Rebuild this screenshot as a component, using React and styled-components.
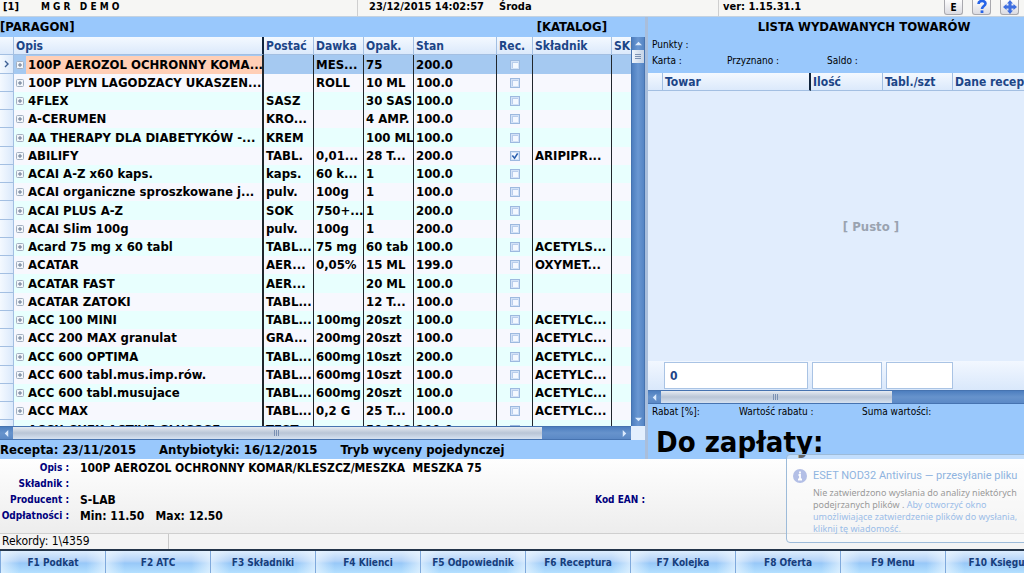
import React from "react"
import styled, { createGlobalStyle, css } from "styled-components"

const GlobalStyle = createGlobalStyle`
  * {
    box-sizing: border-box;
  }

  body {
    margin: 0;
    overflow: hidden;
    background: #f5f5f5;
    color: #000;
    font-family: "DejaVu Sans Condensed", "Liberation Sans", sans-serif;
    font-size: 13px;
    font-weight: 700;
  }

  button,
  input {
    font: inherit;
    color: inherit;
    margin: 0;
    padding: 0;
  }
`

const Screen = styled.div`
  height: 100vh;
  display: flex;
  flex-direction: column;
`

const TopBar = styled.header`
  flex: 0 0 17px;
  display: grid;
  grid-template-columns: 358px 361px 1fr;
  background: #f6f6f4;
  border-bottom: 1px solid #c4d2e0;
  font-size: 11px;
  line-height: 13px;
  white-space: pre;
`

const TopCell = styled.div`
  display: flex;
  gap: ${p => p.$gap || 0}px;
  padding-left: ${p => p.$indent}px;
  border-right: ${p => (p.$last ? 0 : 1)}px solid #cfcfcf;
`

const User = styled.span`
  font-size: 10px;
`

const Tools = styled.div`
  display: flex;
  gap: 9px;
  margin-left: auto;
  padding-right: 5px;
`

const ToolButton = styled.button`
  width: 19px;
  height: 15px;
  display: flex;
  align-items: center;
  justify-content: center;
  border: 1px solid #a9a9ae;
  border-top: 0;
  border-radius: 0 0 3px 3px;
  background: linear-gradient(#fdfdfd, #dcdce2);
  font-size: 10px;
`

const Main = styled.main`
  flex: 1 1 0;
  min-height: 0;
  display: grid;
  grid-template-columns: 645fr 379fr;
`

const Panel = styled.section`
  min-width: 0;
  min-height: 0;
  overflow: hidden;
  display: flex;
  flex-direction: column;
  background: #99c8fc;
  border-left: ${p => (p.$divided ? 3 : 0)}px solid #a9bedb;
`

const Heading = styled.div`
  flex: 0 0 20px;
  display: flex;
  justify-content: space-between;
  padding-right: 38px;
  line-height: 20px;
`

const HeadingText = styled.h2`
  margin: 0;
  font-size: 13px;
`

const GridArea = styled.div`
  flex: 1 1 0;
  min-height: 0;
  display: flex;
`

const GridView = styled.div`
  flex: 1 1 0;
  min-width: 0;
  overflow: hidden;
  background: #f8f9ff;
`

const Table = styled.table`
  width: ${p => p.$width}px;
  table-layout: fixed;
  border-collapse: separate;
  border-spacing: 0;
`

const Th = styled.th`
  height: 18px;
  padding: 0 0 0 2px;
  overflow: hidden;
  text-align: left;
  white-space: nowrap;
  font-size: 12px;
  line-height: 16px;
  color: #1c4587;
  background: linear-gradient(#f4f9ff, #dbe9fb);
  border-right: ${p => (p.$thick ? "2px solid #10243c" : "1px solid #a3bfe2")};
  border-bottom: 1px solid #a3bfe2;
`

const Td = styled.td`
  height: 18px;
  padding: 0 0 0 2px;
  overflow: hidden;
  white-space: nowrap;
  line-height: 18px;
  border-right: ${p => (p.$thick ? 2 : 1)}px solid #20262c;
`

const Marker = styled.td`
  padding: 0 0 0 4px;
  line-height: 0;
  background: linear-gradient(90deg, #f4f9ff, #dbe9fb);
  border-right: 1px solid #a3bfe2;
  border-bottom: 1px solid #a3bfe2;
`

const Row = styled.tr`
  background: #f7f8fe;

  &:nth-child(odd) {
    background: #e8fffe;
  }

  &:nth-child(4n + 1) td {
    height: 19px;
  }

  ${p =>
    p.$selected &&
    css`
      &&& {
        background: #a5c9f1;
      }
    `}
`

const NameCell = styled.div`
  display: flex;
  align-items: center;
  gap: 2px;
`

const NameText = styled.span`
  flex: 1 1 0;
  padding-left: 2px;
  overflow: hidden;
  background: ${p => (p.$selected ? "#ffcfb6" : "transparent")};
`

const TickBox = styled.label`
  display: grid;
  place-items: center;
  padding-right: 2px;

  > * {
    grid-area: 1 / 1;
  }

  svg {
    pointer-events: none;
  }
`

const Tick = styled.input.attrs({ type: "checkbox" })`
  appearance: none;
  width: 10px;
  height: 10px;
  border: 1px solid #9db9df;
  background: #f4f8ff;
  box-shadow: inset 0 0 0 1px #d3e2f7, inset 2px 2px 0 0 #b9cdec;

  &:checked {
    box-shadow: inset 0 0 0 1px #d3e2f7;
  }
`

const VBar = styled.div`
  flex: 0 0 14px;
  display: flex;
  flex-direction: column;
  background: linear-gradient(90deg, #4d7ebf, #6a97d2 50%, #5585c4);
  border: 1px solid #4673b0;
  border-width: 0 1px;
`

const HBar = styled.div`
  flex: 0 0 14px;
  height: 14px;
  display: flex;
  background: linear-gradient(#4d7ebf, #6793cc 50%, #5b89c6);
  border: 1px solid #4673b0;
  border-width: 1px 0;
  margin-right: ${p => p.$end || 0}px;
`

const HBarRow = styled.div`
  flex: 0 0 14px;
  background: #e3effd;
`

const ArrowButton = styled.button`
  flex: 0 0 13px;
  display: flex;
  align-items: center;
  justify-content: center;
  border: 0;
  background: transparent;
`

const HThumb = styled.div`
  flex: ${p => p.$grow} 1 0;
  display: flex;
  align-items: center;
  justify-content: center;
  background: linear-gradient(#e6ebf2, #b9c5d6 50%, #d6e2f1);
`

const Rest = styled.div`
  flex: ${p => p.$grow || 1} 1 0;
`

const VThumb = styled.div`
  flex: 0 0 13px;
  display: flex;
  align-items: center;
  justify-content: center;
  background: linear-gradient(90deg, #eef4fb, #c5d3e6);
`

const StatusLine = styled.div`
  flex: 0 0 19px;
  display: flex;
  gap: 23px;
  line-height: 19px;
  white-space: nowrap;
`

/* the issue list is laid out wider than the window and runs off its edge */
const Wide = styled.div`
  flex: 1 1 0;
  min-width: 432px;
  min-height: 0;
  display: flex;
  flex-direction: column;
`

const ListTitle = styled.h2`
  flex: 0 0 20px;
  margin: 0;
  font-size: 13px;
  line-height: 20px;
  text-align: center;
`

const Facts = styled.div`
  flex: 0 0 ${p => p.$height}px;
  display: grid;
  grid-template-columns: ${p => p.$columns};
  align-content: start;
  padding-left: 4px;
  font-size: 10px;
  font-weight: 400;
  line-height: 16px;
  white-space: nowrap;
`

const Fact = styled.span`
  grid-column: ${p => (p.$full ? "1 / -1" : "auto")};
`

const Empty = styled.div`
  flex: 1 1 0;
  display: flex;
  align-items: center;
  justify-content: center;
  padding-left: 14px;
  background: #e1edfd;
  color: #9aa3b0;
`

const Totals = styled.div`
  flex: 0 0 29px;
  display: grid;
  grid-template-columns: 144px 70px 67px;
  gap: 4px;
  padding: 1px 0 1px 16px;
  background: linear-gradient(#f2f7ff, #d9e8fb);
`

const TotalInput = styled.input`
  min-width: 0;
  width: 100%;
  padding-left: 5px;
  border: 1px solid #a9c3e4;
  background: #fff;
  color: #1c4587;
  font-size: 12px;
`

const Due = styled.div`
  flex: 0 0 38px;
  overflow: hidden;
  padding-left: 8px;
  font-size: 29px;
  line-height: 42px;
`

const Details = styled.dl`
  flex: 0 0 75px;
  margin: 0;
  padding-top: 1px;
  display: grid;
  grid-template-columns: 69px 500fr auto 365fr;
  grid-auto-rows: 16px;
  column-gap: 11px;
  line-height: 16px;
  background: linear-gradient(#fefefe, #ededed);
  border-bottom: 1px solid #cfcfcf;
`

const Term = styled.dt`
  grid-column: ${p => p.$column || 1};
  text-align: right;
  white-space: nowrap;
  font-size: 10px;
  color: #00007d;
`

const Value = styled.dd`
  grid-column: 2;
  margin: 0;
  font-size: 12px;
  white-space: pre;
`

const Records = styled.div`
  flex: 0 0 15px;
  display: flex;
  background: #f4f4f4;
  font-size: 12px;
  font-weight: 400;
  line-height: 15px;
`

const RecordCount = styled.span`
  width: 169px;
  padding-left: 2px;
  border-right: 1px solid #c9c9c9;
`

const Keys = styled.nav`
  flex: 0 0 24px;
  display: flex;
  overflow: hidden;
  border-top: 2px solid #24354a;
`

const KeyButton = styled.button`
  flex: 1 0 105px;
  border: 0;
  border-left: 1px solid #7fa9dc;
  background: linear-gradient(
      90deg,
      rgba(235, 246, 255, 0.7),
      transparent 18%,
      transparent 82%,
      rgba(235, 246, 255, 0.7)
    ),
    linear-gradient(#dcecfd, #b3d3f8 45%, #98c8f8 55%, #b4e0ff);
  color: #173e7c;
  font-size: 10px;
  white-space: nowrap;
`

const Toast = styled.aside`
  position: absolute;
  right: -6px;
  bottom: 30px;
  width: 244px;
  height: 89px;
  padding: 14px 0 0 6px;
  display: grid;
  grid-template-columns: 14px 1fr;
  grid-template-rows: 18px 1fr;
  column-gap: 6px;
  border: 1px solid #9dbbd9;
  border-radius: 4px;
  background: rgba(255, 255, 255, 0.4);
  font-family: "Noto Sans", sans-serif;
  font-weight: 400;
`

const ToastTitle = styled.h3`
  margin: 0;
  font-family: Roboto, "Noto Sans", sans-serif;
  font-size: 11px;
  font-weight: 400;
  line-height: 14px;
  color: #8fb4e0;
  white-space: nowrap;
`

const ToastText = styled.p`
  grid-column: 2;
  margin: 0;
  font-size: 9px;
  line-height: 12px;
  color: #9a9a9a;
  white-space: nowrap;
`

const ToastLink = styled.a`
  color: #9bbde8;
  text-decoration: none;
`

const Arrow = ({ turn }) => (
  <svg width="7" height="7" viewBox="0 0 8 8">
    <path d="M0 6 4 2l4 4z" fill="#dcebfd" transform={`rotate(${turn} 4 4)`} />
  </svg>
)

const Grip = ({ turn = 0 }) => (
  <svg width="8" height="8" viewBox="0 0 8 8">
    <path
      d="M1.5 1v6M3.5 1v6M5.5 1v6"
      stroke="#7b91b3"
      transform={`rotate(${turn} 4 4)`}
    />
  </svg>
)

const Expander = () => (
  <svg width="8" height="8" viewBox="0 0 8 8">
    <rect x=".5" y=".5" width="7" height="7" rx="1" fill="#f2f6fb" stroke="#a3afc0" />
    <path d="M2 4h4M4 2v4" stroke="#66768f" />
  </svg>
)

const columns = [
  ["", 14],
  ["Opis", 250],
  ["Postać", 50],
  ["Dawka", 50],
  ["Opak.", 50],
  ["Stan", 83],
  ["Rec.", 36],
  ["Składnik", 79],
  ["SKU", 60],
]

const goods = [
  ["100P AEROZOL OCHRONNY KOMA...", "", "MES...", "75", "200.0", ""],
  ["100P PLYN LAGODZACY UKASZEN...", "", "ROLL", "10 ML", "100.0", ""],
  ["4FLEX", "SASZ", "", "30 SAS", "100.0", ""],
  ["A-CERUMEN", "KRO...", "", "4 AMP.", "100.0", ""],
  ["AA THERAPY DLA DIABETYKÓW -...", "KREM", "", "100 ML", "100.0", ""],
  ["ABILIFY", "TABL.", "0,01...", "28 T...", "200.0", "ARIPIPR...", true],
  ["ACAI A-Z x60 kaps.", "kaps.", "60 k...", "1", "100.0", ""],
  ["ACAI organiczne sproszkowane j...", "pulv.", "100g", "1", "100.0", ""],
  ["ACAI PLUS A-Z", "SOK", "750+...", "1", "200.0", ""],
  ["ACAI Slim 100g", "pulv.", "100g", "1", "200.0", ""],
  ["Acard 75 mg x 60 tabl", "TABL...", "75 mg", "60 tab", "100.0", "ACETYLS..."],
  ["ACATAR", "AER...", "0,05%", "15 ML", "199.0", "OXYMET..."],
  ["ACATAR FAST", "AER...", "", "20 ML", "100.0", ""],
  ["ACATAR ZATOKI", "TABL...", "", "12 T...", "100.0", ""],
  ["ACC 100 MINI", "TABL...", "100mg", "20szt", "100.0", "ACETYLC..."],
  ["ACC 200 MAX granulat", "GRA...", "200mg", "20szt", "100.0", "ACETYLC..."],
  ["ACC 600 OPTIMA", "TABL...", "600mg", "10szt", "200.0", "ACETYLC..."],
  ["ACC 600 tabl.mus.imp.rów.", "TABL...", "600mg", "10szt", "100.0", "ACETYLC..."],
  ["ACC 600 tabl.musujace", "TABL...", "600mg", "20szt", "100.0", "ACETYLC..."],
  ["ACC MAX", "TABL...", "0,2 G", "25 T...", "100.0", "ACETYLC..."],
  ["ACCU-CHEK ACTIVE GLUCOSE", "TEST", "", "50 PAS", "200.0", ""],
]

const issueColumns = [
  ["", 15],
  ["Towar", 148],
  ["Ilość", 72],
  ["Tabl./szt", 70],
  ["Dane recepty", 127],
]

const keys = [
  "F1 Podkat",
  "F2 ATC",
  "F3 Składniki",
  "F4 Klienci",
  "F5 Odpowiednik",
  "F6 Receptura",
  "F7 Kolejka",
  "F8 Oferta",
  "F9 Menu",
  "F10 Księguj",
]

const GoodsRow = ({ item, selected }) => {
  const [name, form, dose, pack, stock, substance, rx] = item
  return (
    <Row $selected={selected}>
      <Marker>
        {selected && (
          <svg width="6" height="8" viewBox="0 0 6 8">
            <path d="M1 1l3 3-3 3" fill="none" stroke="#3d5f93" strokeWidth="1.4" />
          </svg>
        )}
      </Marker>
      <Td $thick>
        <NameCell>
          <Expander />
          <NameText $selected={selected}>{name}</NameText>
        </NameCell>
      </Td>
      <Td>{form}</Td>
      <Td>{dose}</Td>
      <Td>{pack}</Td>
      <Td>{stock}</Td>
      <Td>
        <TickBox>
          <Tick defaultChecked={rx} aria-label={`Rec. ${name}`} />
          {rx && (
            <svg width="8" height="8" viewBox="0 0 9 9">
              <path d="M1.5 4l2.5 3 3.5-5.5" fill="none" stroke="#2b5fae" strokeWidth="1.8" />
            </svg>
          )}
        </TickBox>
      </Td>
      <Td>{substance}</Td>
      <Td />
    </Row>
  )
}

const Catalogue = () => (
  <Panel>
    <Heading>
      <HeadingText>[PARAGON]</HeadingText>
      <HeadingText>[KATALOG]</HeadingText>
    </Heading>
    <GridArea>
      <GridView>
        <Table $width={672}>
          <colgroup>
            {columns.map(([label, width]) => (
              <col key={label} width={width} />
            ))}
          </colgroup>
          <thead>
            <tr>
              {columns.map(([label]) => (
                <Th key={label} $thick={label === "Opis"}>
                  {label}
                </Th>
              ))}
            </tr>
          </thead>
          <tbody>
            {goods.map((item, i) => (
              <GoodsRow key={item[0]} item={item} selected={i === 0} />
            ))}
          </tbody>
        </Table>
      </GridView>
      <VBar>
        <ArrowButton aria-label="W górę">
          <Arrow turn={0} />
        </ArrowButton>
        <VThumb>
          <Grip turn={90} />
        </VThumb>
        <Rest />
        <ArrowButton aria-label="W dół">
          <Arrow turn={180} />
        </ArrowButton>
      </VBar>
    </GridArea>
    <HBarRow>
      <HBar $end={14}>
        <ArrowButton aria-label="W lewo">
          <Arrow turn={270} />
        </ArrowButton>
        <HThumb $grow={528}>
          <Grip />
        </HThumb>
        <Rest $grow={76} />
        <ArrowButton aria-label="W prawo">
          <Arrow turn={90} />
        </ArrowButton>
      </HBar>
    </HBarRow>
    <StatusLine>
      <span>Recepta: 23/11/2015</span>
      <span>Antybiotyki: 16/12/2015</span>
      <span>Tryb wyceny pojedynczej</span>
    </StatusLine>
  </Panel>
)

const IssueList = () => (
  <Panel $divided>
    <Wide>
      <ListTitle>LISTA WYDAWANYCH TOWARÓW</ListTitle>
      <Facts $height={36} $columns="75px 100px 1fr">
        <Fact $full>Punkty :</Fact>
        <Fact>Karta :</Fact>
        <Fact>Przyznano :</Fact>
        <Fact>Saldo :</Fact>
      </Facts>
      <Table $width={432}>
        <colgroup>
          {issueColumns.map(([label, width]) => (
            <col key={label} width={width} />
          ))}
        </colgroup>
        <thead>
          <tr>
            {issueColumns.map(([label]) => (
              <Th key={label} $thick={label === "Towar"}>
                {label}
              </Th>
            ))}
          </tr>
        </thead>
      </Table>
      <Empty>[ Pusto ]</Empty>
      <Totals>
        <TotalInput defaultValue="0" aria-label="Towar" />
        <TotalInput aria-label="Ilość" />
        <TotalInput aria-label="Tabl./szt" />
      </Totals>
      <HBar>
        <ArrowButton aria-label="W lewo">
          <Arrow turn={270} />
        </ArrowButton>
        <HThumb $grow={230}>
          <Grip />
        </HThumb>
        <Rest $grow={188} />
      </HBar>
      <Facts $height={17} $columns="87px 123px 1fr">
        <Fact>Rabat [%]:</Fact>
        <Fact>Wartość rabatu :</Fact>
        <Fact>Suma wartości:</Fact>
      </Facts>
      <Due>Do zapłaty:</Due>
    </Wide>
  </Panel>
)

const App = () => (
  <Screen>
    <GlobalStyle />
    <TopBar>
      <TopCell $indent={3} $gap={22}>
        <span>[1]</span>
        <User>{"M G R   D E M O"}</User>
      </TopCell>
      <TopCell $indent={11} $gap={15}>
        <span>23/12/2015 14:02:57</span>
        <span>Środa</span>
      </TopCell>
      <TopCell $indent={4} $last>
        <span>ver: 1.15.31.1</span>
        <Tools>
          <ToolButton>E</ToolButton>
          <ToolButton aria-label="Pomoc">
            <svg width="12" height="14" viewBox="0 0 12 14">
              <path
                d="M2.5 4c0-4 7-4 7-.5C9.5 6 6 6 6 9"
                fill="none"
                stroke="#2563e8"
                strokeWidth="2.6"
              />
              <rect x="4.6" y="10.4" width="2.8" height="2.6" fill="#2563e8" />
            </svg>
          </ToolButton>
          <ToolButton aria-label="Przesuń">
            <svg width="14" height="14" viewBox="0 0 14 14" fill="#3f6fe0">
              <path d="M7 0l3 3.5H8.500V5.500h2V4L14 7l-3.500 3V8.500h-2v2H10L7 14l-3-3.500h1.500v-2h-2V10L0 7l3.500-3v1.500h2v-2H4z" />
            </svg>
          </ToolButton>
        </Tools>
      </TopCell>
    </TopBar>
    <Main>
      <Catalogue />
      <IssueList />
    </Main>
    <Details>
      <Term>Opis :</Term>
      <Value>{"100P AEROZOL OCHRONNY KOMAR/KLESZCZ/MESZKA  MESZKA 75"}</Value>
      <Term>Składnik :</Term>
      <Value />
      <Term>Producent :</Term>
      <Value>S-LAB</Value>
      <Term $column={3}>Kod EAN :</Term>
      <Term>Odpłatności :</Term>
      <Value>{"Min: 11.50   Max: 12.50"}</Value>
    </Details>
    <Records>
      <RecordCount>Rekordy: 1\4359</RecordCount>
    </Records>
    <Keys>
      {keys.map(label => (
        <KeyButton key={label}>{label}</KeyButton>
      ))}
    </Keys>
    <Toast>
      <svg width="14" height="14" viewBox="0 0 14 14">
        <circle cx="7" cy="7" r="7" fill="#b3bfe6" />
        <path d="M7 2.5v2M5.5 6H7v4.5M5 10.5h4" stroke="#fff" strokeWidth="1.8" fill="none" />
      </svg>
      <ToastTitle>ESET NOD32 Antivirus — przesyłanie pliku</ToastTitle>
      <ToastText>
        Nie zatwierdzono wysłania do analizy niektórych
        <br />
        podejrzanych plików .{" "}
        <ToastLink href="#">
          Aby otworzyć okno
          <br />
          umożliwiające zatwierdzenie plików do wysłania,
          <br />
          kliknij tę wiadomość.
        </ToastLink>
      </ToastText>
    </Toast>
  </Screen>
)

export default App
